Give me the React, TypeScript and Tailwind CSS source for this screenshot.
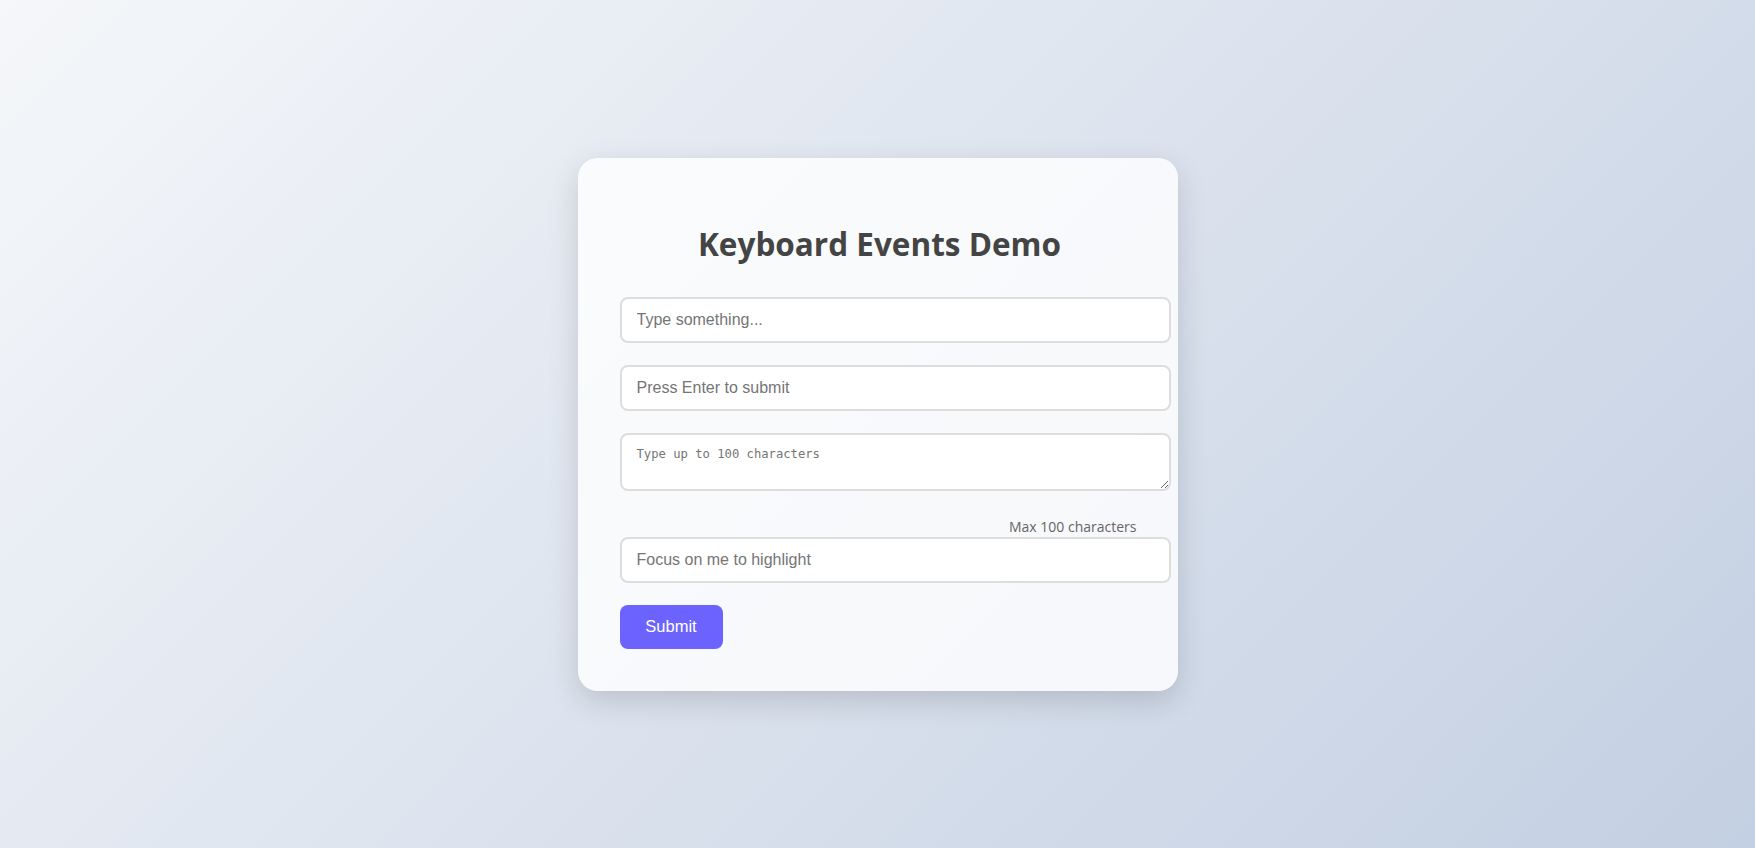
export default function App() {
  return (
    <div className="flex min-h-screen items-center justify-center bg-[linear-gradient(135deg,#f5f7fa_0%,#c3cfe2_100%)]">
      <div className="flex h-[533px] w-[600px] flex-col rounded-[20px] bg-white/80 pt-[40px] pl-[42px] pr-[40px] pb-[40px] shadow-[0_10px_30px_rgba(0,0,0,0.15)]">
        <h1 className="mt-[23px] mb-[30px] mr-[-2px] text-center font-['Open_Sans',sans-serif] text-[31.5px] leading-[46px] font-bold text-[#444]">
          Keyboard Events Demo
        </h1>

        <input
          type="text"
          placeholder="Type something..."
          className="box-border h-[46px] w-[551px] rounded-lg border-2 border-[#ddd] bg-white px-[15px] font-['Liberation_Sans',Arial,sans-serif] text-base text-[#333] outline-none placeholder:text-[#757575]"
        />
        <input
          type="text"
          placeholder="Press Enter to submit"
          className="mt-[22px] box-border h-[46px] w-[551px] rounded-lg border-2 border-[#ddd] bg-white px-[15px] font-['Liberation_Sans',Arial,sans-serif] text-base text-[#333] outline-none placeholder:text-[#757575]"
        />
        <textarea
          rows={2}
          maxLength={100}
          placeholder="Type up to 100 characters"
          className="mt-[22px] box-border block h-[58px] w-[551px] rounded-lg border-2 border-[#ddd] bg-white px-[15px] py-[12px] font-['DejaVu_Sans_Mono',monospace] text-[12.2px] leading-[15px] text-[#333] outline-none placeholder:text-[#757575]"
        />
        <p className="mt-[26px] h-[19px] pr-[1px] text-right font-['Open_Sans',sans-serif] text-[14px] leading-[19px] text-[#666]">
          Max 100 characters
        </p>
        <input
          type="text"
          placeholder="Focus on me to highlight"
          className="mt-[1px] box-border h-[46px] w-[551px] rounded-lg border-2 border-[#ddd] bg-white px-[15px] font-['Liberation_Sans',Arial,sans-serif] text-base text-[#333] outline-none placeholder:text-[#757575]"
        />
        <button
          type="button"
          className="mt-[22px] h-[44px] w-[103px] rounded-lg bg-[#6c63ff] text-center font-['Liberation_Sans',Arial,sans-serif] text-[16.5px] text-white"
        >
          Submit
        </button>
      </div>
    </div>
  );
}
